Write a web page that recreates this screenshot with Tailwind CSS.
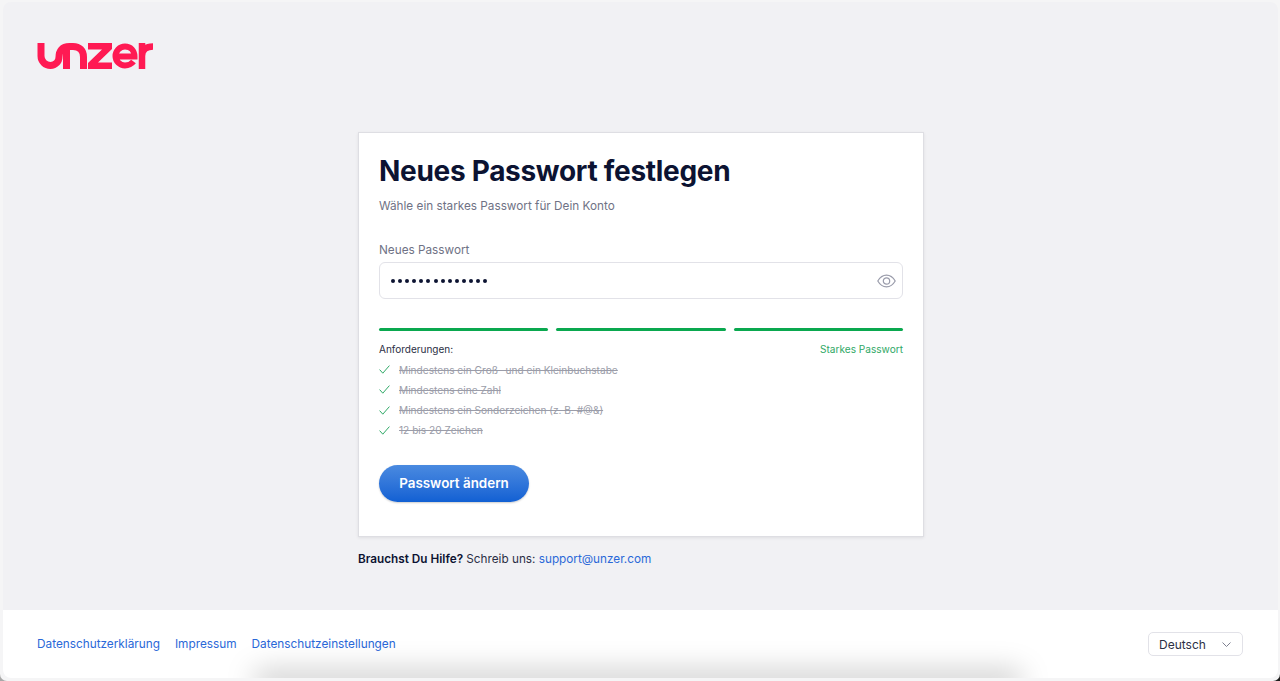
<!DOCTYPE html>
<html lang="de">
<head>
  <meta charset="UTF-8" />
  <meta name="viewport" content="width=device-width, initial-scale=1.0"/>
  <title>Unzer – Neues Passwort festlegen</title>
  <script src="https://cdn.jsdelivr.net/npm/@tailwindcss/browser@4"></script>
</head>
<body class="bg-gradient-to-r from-[#a8a8a8] to-[#1c1c1c] font-['Inter',sans-serif]">
  <div class="h-[681px] overflow-hidden rounded-b-[7px] bg-[#f5f5f6] pl-[3px] pr-[2px] pt-[2px] pb-[3px]">
    <div class="relative flex h-full flex-col overflow-hidden rounded-[8px] bg-[#f1f1f4]">

      <!-- Logo -->
      <header class="h-[130px] shrink-0 pl-[34px] pt-[40px]">
        <svg class="h-[28px] w-[117px]" viewBox="0 0 117 28" fill="none" stroke="#ff1a53" stroke-width="7" role="img" aria-label="unzer">
          <path d="M4 1V14a9.500 9.500 0 0 0 9.500 9.500c5 0 8.500-4 8.500-8.500 0-6 3-10.500 10.500-10.500h3.500c6.500 0 10.500 4 10.500 10.500V27" />
          <path d="M29.500 8V27" />
          <path d="M51 1H75V7L61 20.500H75V27H51V21L65 7.500H51Z" fill="#ff1a53" stroke="none" />
          <path d="M79 14.500H97.500c0-6-4-10-9.500-10a9.500 9.500 0 0 0 0 19c3.500 0 6.500-1.500 8.500-4" stroke-width="6" />
          <path d="M105 1V27M105 14c0-6 4-9.500 11-9.500" stroke-width="6.500" />
        </svg>
      </header>

      <!-- Card -->
      <main class="flex-1 pl-[1px]">
        <div class="mx-auto w-[566px]">
          <div class="h-[405px] border border-[#dedee3] bg-white px-[20px] pt-[20px] shadow-[0_1px_3px_rgba(0,0,0,0.08)]">
            <h1 class="text-[28px] leading-[36px] font-bold tracking-[-0.3px] text-[#0c1332]">Neues Passwort festlegen</h1>
            <p class="mt-[8px] text-[11.750px] leading-[18px] text-[#6f7285]">Wähle ein starkes Passwort für Dein Konto</p>

            <label class="mt-[26px] block text-[11.750px] leading-[18px] text-[#6f7285]">Neues Passwort</label>
            <div class="mt-[3px] flex h-[37px] items-center justify-between rounded-[6px] border border-[#e2e2e8] bg-white pl-[11px] pr-[6px]">
              <span class="flex gap-[3.100px]">
                <i class="size-[4px] rounded-full bg-[#0c1332]"></i><i class="size-[4px] rounded-full bg-[#0c1332]"></i><i class="size-[4px] rounded-full bg-[#0c1332]"></i><i class="size-[4px] rounded-full bg-[#0c1332]"></i><i class="size-[4px] rounded-full bg-[#0c1332]"></i><i class="size-[4px] rounded-full bg-[#0c1332]"></i><i class="size-[4px] rounded-full bg-[#0c1332]"></i><i class="size-[4px] rounded-full bg-[#0c1332]"></i><i class="size-[4px] rounded-full bg-[#0c1332]"></i><i class="size-[4px] rounded-full bg-[#0c1332]"></i><i class="size-[4px] rounded-full bg-[#0c1332]"></i><i class="size-[4px] rounded-full bg-[#0c1332]"></i><i class="size-[4px] rounded-full bg-[#0c1332]"></i><i class="size-[4px] rounded-full bg-[#0c1332]"></i>
              </span>
              <svg class="h-[14px] w-[19px]" viewBox="0 0 19 14" fill="none" stroke="#9a9cab" stroke-width="1.200">
                <path d="M.8 7C3 3.200 6 1.200 9.500 1.200S16 3.200 18.200 7C16 10.800 13 12.800 9.500 12.800S3 10.800.8 7Z" />
                <circle cx="9.500" cy="7" r="3.200" />
              </svg>
            </div>

            <!-- Strength -->
            <div class="mt-[29px] grid grid-cols-3 gap-[8px]">
              <div class="h-[3px] rounded-full bg-[#0aa84f]"></div>
              <div class="h-[3px] rounded-full bg-[#0aa84f]"></div>
              <div class="h-[3px] rounded-full bg-[#0aa84f]"></div>
            </div>
            <div class="mt-[10px] flex items-center justify-between text-[10px] leading-[16px]">
              <span class="text-[#2b2f45]">Anforderungen:</span>
              <span class="text-[10.100px] text-[#2fa866]">Starkes Passwort</span>
            </div>
            <ul class="mt-[2.500px] text-[10.150px] leading-[20.300px] text-[#9b9da9] line-through">
              <li class="flex items-center gap-[9px]">
                <svg class="size-[11px]" viewBox="0 0 11 11" fill="none" stroke="#2fa866" stroke-width="1"><path d="M.6 5.600 3.800 9.200 10.400 1.600" /></svg>
                <span>Mindestens ein Groß- und ein Kleinbuchstabe</span>
              </li>
              <li class="flex items-center gap-[9px]">
                <svg class="size-[11px]" viewBox="0 0 11 11" fill="none" stroke="#2fa866" stroke-width="1"><path d="M.6 5.600 3.800 9.200 10.400 1.600" /></svg>
                <span>Mindestens eine Zahl</span>
              </li>
              <li class="flex items-center gap-[9px]">
                <svg class="size-[11px]" viewBox="0 0 11 11" fill="none" stroke="#2fa866" stroke-width="1"><path d="M.6 5.600 3.800 9.200 10.400 1.600" /></svg>
                <span>Mindestens ein Sonderzeichen (z. B. #@&amp;)</span>
              </li>
              <li class="flex items-center gap-[9px]">
                <svg class="size-[11px]" viewBox="0 0 11 11" fill="none" stroke="#2fa866" stroke-width="1"><path d="M.6 5.600 3.800 9.200 10.400 1.600" /></svg>
                <span>12 bis 20 Zeichen</span>
              </li>
            </ul>

            <button type="button" class="mt-[24px] h-[37px] w-[150px] rounded-full bg-gradient-to-b from-[#4a8ae0] to-[#1160d3] text-[13.400px] font-semibold text-white shadow-[0_1px_2px_rgba(0,0,0,0.2)]">Passwort ändern</button>
          </div>
          <p class="mt-[13px] text-[11.750px] leading-[18px] text-[#2b2f45]"><b class="font-semibold text-[#0c1332]">Brauchst Du Hilfe?</b> Schreib uns: <a href="#" class="text-[#2a68d8]">support@unzer.com</a></p>
        </div>
      </main>

      <!-- Footer -->
      <footer class="relative flex h-[68px] shrink-0 items-center justify-between overflow-hidden bg-white pl-[34px] pr-[35px]">
        <nav class="flex gap-[15px] pt-[1px] text-[11.800px] text-[#2a68d8]">
          <a href="#">Datenschutzerklärung</a>
          <a href="#">Impressum</a>
          <a href="#">Datenschutzeinstellungen</a>
        </nav>
        <div class="flex h-[24px] w-[95px] items-center justify-between rounded-[5px] border border-[#e2e2e8] pl-[10px] pr-[11px] pt-[1px] text-[12px] text-[#2b2f45]">
          <span>Deutsch</span>
          <svg class="h-[5px] w-[9px]" viewBox="0 0 9 5" fill="none" stroke="#7d8090" stroke-width="1"><path d="M.5.500 4.500 4.500 8.500.500" /></svg>
        </div>
        <div class="absolute -bottom-[14px] left-[250px] h-[22px] w-[770px] rounded-full bg-black/20 blur-[14px]"></div>
      </footer>
    </div>
  </div>
</body>
</html>
